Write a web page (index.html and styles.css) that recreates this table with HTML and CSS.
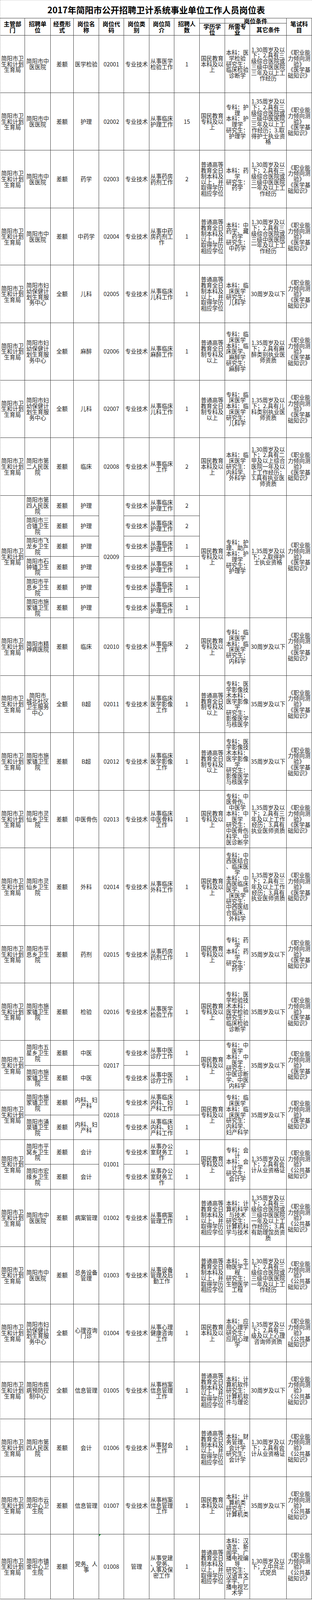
FILE: index.html
```html
<!DOCTYPE html>
<html lang="zh-CN">
<head>
<meta charset="utf-8">
<title>2017年简阳市公开招聘卫计系统事业单位工作人员岗位表</title>
<link rel="stylesheet" href="styles.css">
</head>
<body>
<div class="sheet">
  <div class="title">2017年简阳市公开招聘卫计系统事业单位工作人员岗位表</div>
  <div class="grid">
    <!-- header -->
    <div class="c h r2"><span>主管部<br>门</span></div>
    <div class="c h r2"><span>招聘单<br>位</span></div>
    <div class="c h r2"><span>经费形<br>式</span></div>
    <div class="c h r2"><span>岗位名<br>称</span></div>
    <div class="c h r2"><span>岗位代<br>码</span></div>
    <div class="c h r2"><span>岗位类<br>别</span></div>
    <div class="c h r2"><span>岗位简<br>介</span></div>
    <div class="c h r2"><span>招聘人<br>数</span></div>
    <div class="c h"><span></span></div>
    <div class="c h cs2 top"><span>岗位条件</span></div>
    <div class="c h r2"><span>笔试科<br>目</span></div>
    <div class="c h"><span>学历学<br>位</span></div>
    <div class="c h"><span>所需专<br>业</span></div>
    <div class="c h"><span>其它条件</span></div>

    <!-- 02001 -->
    <div class="c"><span>简阳市卫<br>生和计划<br>生育局</span></div>
    <div class="c"><span>简阳市中<br>医医院</span></div>
    <div class="c"><span>差额</span></div>
    <div class="c"><span>医学检验</span></div>
    <div class="c"><span>02001</span></div>
    <div class="c"><span>专业技术</span></div>
    <div class="c"><span>从事医学<br>检验工作</span></div>
    <div class="c"><span>1</span></div>
    <div class="c"><span>国民教育<br>本科及以<br>上</span></div>
    <div class="c"><span>本科：医<br>学检验<br>研究生：<br>临床检验<br>诊断学</span></div>
    <div class="c"><span>1.30周岁及以<br>下；2.具有三<br>级综合医院或<br>三级中医医院<br>三年及以上工<br>作经历</span></div>
    <div class="c"><span>《职业能<br>力倾向测<br>验》<br>《医学基<br>础知识》</span></div>

    <!-- 02002 -->
    <div class="c"><span>简阳市卫<br>生和计划<br>生育局</span></div>
    <div class="c"><span>简阳市中<br>医医院</span></div>
    <div class="c"><span>差额</span></div>
    <div class="c"><span>护理</span></div>
    <div class="c"><span>02002</span></div>
    <div class="c"><span>专业技术</span></div>
    <div class="c"><span>从事临床<br>护理工作</span></div>
    <div class="c"><span>15</span></div>
    <div class="c"><span>国民教育<br>专科及以<br>上</span></div>
    <div class="c"><span>专科：护<br>理<br>本科：护<br>理学<br>研究生：<br>护理学</span></div>
    <div class="c"><span>1.35周岁及以<br>下；2.具有三<br>级综合医院或<br>三级中医医院<br>三年及以上工<br>作经历；3.取<br>得护士执业资<br>格</span></div>
    <div class="c"><span>《职业能<br>力倾向测<br>验》<br>《医学基<br>础知识》</span></div>

    <!-- 02003 -->
    <div class="c"><span>简阳市卫<br>生和计划<br>生育局</span></div>
    <div class="c"><span>简阳市中<br>医医院</span></div>
    <div class="c"><span>差额</span></div>
    <div class="c"><span>药学</span></div>
    <div class="c"><span>02003</span></div>
    <div class="c"><span>专业技术</span></div>
    <div class="c"><span>从事药房<br>药剂工作</span></div>
    <div class="c"><span>2</span></div>
    <div class="c"><span>普通高等<br>教育全日<br>制本科及<br>以上，并<br>取得学历<br>相应学位</span></div>
    <div class="c"><span>本科：药<br>学<br>研究生：<br>药学</span></div>
    <div class="c"><span>1.30周岁及以<br>下；2.具有三<br>级综合医院或<br>三级中医医院<br>一年及以上工<br>作经历</span></div>
    <div class="c"><span>《职业能<br>力倾向测<br>验》<br>《医学基<br>础知识》</span></div>

    <!-- 02004 -->
    <div class="c"><span>简阳市卫<br>生和计划<br>生育局</span></div>
    <div class="c"><span>简阳市中<br>医医院</span></div>
    <div class="c"><span>差额</span></div>
    <div class="c"><span>中药学</span></div>
    <div class="c"><span>02004</span></div>
    <div class="c"><span>专业技术</span></div>
    <div class="c"><span>从事中药<br>房药剂工<br>作</span></div>
    <div class="c"><span>1</span></div>
    <div class="c"><span>普通高等<br>教育全日<br>制本科及<br>以上，并<br>取得学历<br>相应学位</span></div>
    <div class="c"><span>本科：中<br>药学、藏<br>药学<br>研究生：<br>中药学</span></div>
    <div class="c"><span>1.30周岁及以<br>下；2.具有三<br>级综合医院或<br>三级中医医院<br>一年及以上工<br>作经历</span></div>
    <div class="c"><span>《职业能<br>力倾向测<br>验》<br>《医学基<br>础知识》</span></div>

    <!-- 02005 -->
    <div class="c"><span>简阳市卫<br>生和计划<br>生育局</span></div>
    <div class="c"><span>简阳市妇<br>幼保健计<br>划生育服<br>务中心</span></div>
    <div class="c"><span>全额</span></div>
    <div class="c"><span>儿科</span></div>
    <div class="c"><span>02005</span></div>
    <div class="c"><span>专业技术</span></div>
    <div class="c"><span>从事临床<br>儿科工作</span></div>
    <div class="c"><span>1</span></div>
    <div class="c"><span>普通高等<br>教育全日<br>制本科及<br>以上，并<br>取得学历<br>相应学位</span></div>
    <div class="c"><span>本科：临<br>床医学<br>研究生：<br>儿科学</span></div>
    <div class="c"><span>30周岁及以下</span></div>
    <div class="c"><span>《职业能<br>力倾向测<br>验》<br>《医学基<br>础知识》</span></div>

    <!-- 02006 -->
    <div class="c"><span>简阳市卫<br>生和计划<br>生育局</span></div>
    <div class="c"><span>简阳市妇<br>幼保健计<br>划生育服<br>务中心</span></div>
    <div class="c"><span>全额</span></div>
    <div class="c"><span>麻醉</span></div>
    <div class="c"><span>02006</span></div>
    <div class="c"><span>专业技术</span></div>
    <div class="c"><span>从事临床<br>麻醉工作</span></div>
    <div class="c"><span>1</span></div>
    <div class="c"><span>普通高等<br>教育全日<br>制专科及<br>以上</span></div>
    <div class="c"><span>专科：临<br>床医学<br>本科：临<br>床医学、<br>麻醉学<br>研究生：<br>麻醉学</span></div>
    <div class="c"><span>1.35周岁及以<br>下；2.具有麻<br>醉类别执业医<br>师资质</span></div>
    <div class="c"><span>《职业能<br>力倾向测<br>验》<br>《医学基<br>础知识》</span></div>

    <!-- 02007 -->
    <div class="c"><span>简阳市卫<br>生和计划<br>生育局</span></div>
    <div class="c"><span>简阳市妇<br>幼保健计<br>划生育服<br>务中心</span></div>
    <div class="c"><span>全额</span></div>
    <div class="c"><span>儿科</span></div>
    <div class="c"><span>02007</span></div>
    <div class="c"><span>专业技术</span></div>
    <div class="c"><span>从事临床<br>儿科工作</span></div>
    <div class="c"><span>1</span></div>
    <div class="c"><span>普通高等<br>教育全日<br>制专科及<br>以上</span></div>
    <div class="c"><span>专科：临<br>床医学<br>本科：临<br>床医学<br>研究生：<br>儿科学</span></div>
    <div class="c"><span>1.35周岁及以<br>下；2.具有儿<br>科类别执业医<br>师资质</span></div>
    <div class="c"><span>《职业能<br>力倾向测<br>验》<br>《医学基<br>础知识》</span></div>

    <!-- 02008 -->
    <div class="c"><span>简阳市卫<br>生和计划<br>生育局</span></div>
    <div class="c"><span>简阳市第<br>二人民医<br>院</span></div>
    <div class="c"><span>差额</span></div>
    <div class="c"><span>临床</span></div>
    <div class="c"><span>02008</span></div>
    <div class="c"><span>专业技术</span></div>
    <div class="c"><span>从事临床<br>工作</span></div>
    <div class="c"><span>2</span></div>
    <div class="c"><span>国民教育<br>本科及以<br>上</span></div>
    <div class="c"><span>本科：临<br>床医学<br>研究生：<br>内科学、<br>外科学</span></div>
    <div class="c"><span>1.30周岁及以<br>下；2.具有二<br>甲及以上综合<br>医院一年及以<br>上工作经历；<br>3.具有执业医<br>师资质</span></div>
    <div class="c"><span>《职业能<br>力倾向测<br>验》<br>《医学基<br>础知识》</span></div>

    <!-- 02009 group -->
    <div class="c r6"><span>简阳市卫<br>生和计划<br>生育局</span></div>
    <div class="c"><span>简阳市第<br>四人民医<br>院</span></div>
    <div class="c"><span>差额</span></div>
    <div class="c"><span>护理</span></div>
    <div class="c r6"><span>02009</span></div>
    <div class="c"><span>专业技术</span></div>
    <div class="c"><span>从事临床<br>护理工作</span></div>
    <div class="c"><span>2</span></div>
    <div class="c r6"><span>国民教育<br>专科及以<br>上</span></div>
    <div class="c r6"><span>专科：护<br>理、助产<br>本科：护<br>理学<br>研究生：<br>护理学</span></div>
    <div class="c r6"><span>1.35周岁及以<br>下；2.取得护<br>士执业资格</span></div>
    <div class="c r6"><span>《职业能<br>力倾向测<br>验》<br>《医学基<br>础知识》</span></div>

    <div class="c"><span>简阳市三<br>合镇卫生<br>院</span></div>
    <div class="c"><span>差额</span></div>
    <div class="c"><span>护理</span></div>
    <div class="c"><span>专业技术</span></div>
    <div class="c"><span>从事临床<br>护理工作</span></div>
    <div class="c"><span>2</span></div>

    <div class="c"><span>简阳市飞<br>龙乡卫生<br>院</span></div>
    <div class="c"><span>差额</span></div>
    <div class="c"><span>护理</span></div>
    <div class="c"><span>专业技术</span></div>
    <div class="c"><span>从事临床<br>护理工作</span></div>
    <div class="c"><span>1</span></div>

    <div class="c"><span>简阳市石<br>钟镇卫生<br>院</span></div>
    <div class="c"><span>差额</span></div>
    <div class="c"><span>护理</span></div>
    <div class="c"><span>专业技术</span></div>
    <div class="c"><span>从事临床<br>护理工作</span></div>
    <div class="c"><span>1</span></div>

    <div class="c"><span>简阳市平<br>息乡卫生<br>院</span></div>
    <div class="c"><span>差额</span></div>
    <div class="c"><span>护理</span></div>
    <div class="c"><span>专业技术</span></div>
    <div class="c"><span>从事临床<br>护理工作</span></div>
    <div class="c"><span>1</span></div>

    <div class="c"><span>简阳市施<br>家镇卫生<br>院</span></div>
    <div class="c"><span>差额</span></div>
    <div class="c"><span>护理</span></div>
    <div class="c"><span>专业技术</span></div>
    <div class="c"><span>从事临床<br>护理工作</span></div>
    <div class="c"><span>1</span></div>

    <!-- 02010 -->
    <div class="c"><span>简阳市卫<br>生和计划<br>生育局</span></div>
    <div class="c"><span>简阳市精<br>神病医院</span></div>
    <div class="c"><span>差额</span></div>
    <div class="c"><span>临床</span></div>
    <div class="c"><span>02010</span></div>
    <div class="c"><span>专业技术</span></div>
    <div class="c"><span>从事临床<br>工作</span></div>
    <div class="c"><span>2</span></div>
    <div class="c"><span>国民教育<br>专科及以<br>上</span></div>
    <div class="c"><span>专科：临<br>床医学<br>本科：临<br>床医学<br>研究生：<br>内科学</span></div>
    <div class="c"><span>30周岁及以下</span></div>
    <div class="c"><span>《职业能<br>力倾向测<br>验》<br>《医学基<br>础知识》</span></div>

    <!-- 02011 -->
    <div class="c"><span>简阳市卫<br>生和计划<br>生育局</span></div>
    <div class="c"><span>简阳市<br>城北社区<br>卫生服务<br>中心</span></div>
    <div class="c"><span>全额</span></div>
    <div class="c"><span>B超</span></div>
    <div class="c"><span>02011</span></div>
    <div class="c"><span>专业技术</span></div>
    <div class="c"><span>从事临床<br>医学影像<br>工作</span></div>
    <div class="c"><span>1</span></div>
    <div class="c"><span>普通高等<br>教育全日<br>制专科及<br>以上</span></div>
    <div class="c"><span>专科：医<br>学影像技<br>术本科：<br>医学影像<br>学<br>研究生：<br>影像医学<br>与核医学</span></div>
    <div class="c"><span>35周岁及以下</span></div>
    <div class="c"><span>《职业能<br>力倾向测<br>验》<br>《医学基<br>础知识》</span></div>

    <!-- 02012 -->
    <div class="c"><span>简阳市卫<br>生和计划<br>生育局</span></div>
    <div class="c"><span>简阳市施<br>家镇卫生<br>院</span></div>
    <div class="c"><span>差额</span></div>
    <div class="c"><span>B超</span></div>
    <div class="c"><span>02012</span></div>
    <div class="c"><span>专业技术</span></div>
    <div class="c"><span>从事临床<br>医学影像<br>工作</span></div>
    <div class="c"><span>1</span></div>
    <div class="c"><span>普通高等<br>教育全日<br>制专科及<br>以上</span></div>
    <div class="c"><span>专科：医<br>学影像技<br>术本科：<br>医学影像<br>学<br>研究生：<br>影像医学<br>与核医学</span></div>
    <div class="c"><span>35周岁及以下</span></div>
    <div class="c"><span>《职业能<br>力倾向测<br>验》<br>《医学基<br>础知识》</span></div>

    <!-- 02013 -->
    <div class="c"><span>简阳市卫<br>生和计划<br>生育局</span></div>
    <div class="c"><span>简阳市灵<br>仙乡卫生<br>院</span></div>
    <div class="c"><span>差额</span></div>
    <div class="c"><span>中医骨伤</span></div>
    <div class="c"><span>02013</span></div>
    <div class="c"><span>专业技术</span></div>
    <div class="c"><span>从事临床<br>中医骨科<br>工作</span></div>
    <div class="c"><span>1</span></div>
    <div class="c"><span>国民教育<br>专科及以<br>上</span></div>
    <div class="c"><span>专科：中<br>医骨伤、<br>中医学<br>本科：中<br>医学<br>研究生：<br>中医骨伤<br>科学、中<br>医诊断学</span></div>
    <div class="c"><span>1.35周岁及以<br>下；2.具有三<br>年及以上工作<br>经历；3.具有<br>执业医师资质</span></div>
    <div class="c"><span>《职业能<br>力倾向测<br>验》<br>《医学基<br>础知识》</span></div>

    <!-- 02014 -->
    <div class="c"><span>简阳市卫<br>生和计划<br>生育局</span></div>
    <div class="c"><span>简阳市灵<br>仙乡卫生<br>院</span></div>
    <div class="c"><span>差额</span></div>
    <div class="c"><span>外科</span></div>
    <div class="c"><span>02014</span></div>
    <div class="c"><span>专业技术</span></div>
    <div class="c"><span>从事临床<br>外科工作</span></div>
    <div class="c"><span>1</span></div>
    <div class="c"><span>国民教育<br>专科及以<br>上</span></div>
    <div class="c"><span>专科：中<br>西医结合<br>、临床医<br>学<br>本科：中<br>西医临床<br>医学、临<br>床医学<br>研究生：<br>中西医结<br>合临床、<br>外科学</span></div>
    <div class="c"><span>1.35周岁及以<br>下；2.具有三<br>年及以上工作<br>经历；3.具有<br>执业医师资质</span></div>
    <div class="c"><span>《职业能<br>力倾向测<br>验》<br>《医学基<br>础知识》</span></div>

    <!-- 02015 -->
    <div class="c"><span>简阳市卫<br>生和计划<br>生育局</span></div>
    <div class="c"><span>简阳市平<br>息乡卫生<br>院</span></div>
    <div class="c"><span>差额</span></div>
    <div class="c"><span>药剂</span></div>
    <div class="c"><span>02015</span></div>
    <div class="c"><span>专业技术</span></div>
    <div class="c"><span>从事药房<br>药剂工作</span></div>
    <div class="c"><span>1</span></div>
    <div class="c"><span>国民教育<br>专科及以<br>上</span></div>
    <div class="c"><span>专科：药<br>学<br>本科：药<br>学<br>研究生：<br>药学</span></div>
    <div class="c"><span>35周岁及以下</span></div>
    <div class="c"><span>《职业能<br>力倾向测<br>验》<br>《医学基<br>础知识》</span></div>

    <!-- 02016 -->
    <div class="c"><span>简阳市卫<br>生和计划<br>生育局</span></div>
    <div class="c"><span>简阳市施<br>家镇卫生<br>院</span></div>
    <div class="c"><span>差额</span></div>
    <div class="c"><span>检验</span></div>
    <div class="c"><span>02016</span></div>
    <div class="c"><span>专业技术</span></div>
    <div class="c"><span>从事医学<br>检验工作</span></div>
    <div class="c"><span>1</span></div>
    <div class="c"><span>国民教育<br>专科及以<br>上</span></div>
    <div class="c"><span>专科：医<br>学检验技<br>术本科：<br>医学检验<br>研究生：<br>临床检验<br>诊断学</span></div>
    <div class="c"><span>35周岁及以下</span></div>
    <div class="c"><span>《职业能<br>力倾向测<br>验》<br>《医学基<br>础知识》</span></div>

    <!-- 02017 group -->
    <div class="c r2"><span>简阳市卫<br>生和计划<br>生育局</span></div>
    <div class="c"><span>简阳市五<br>星乡卫生<br>院</span></div>
    <div class="c"><span>差额</span></div>
    <div class="c"><span>中医</span></div>
    <div class="c r2"><span>02017</span></div>
    <div class="c"><span>专业技术</span></div>
    <div class="c"><span>从事中医<br>诊疗工作</span></div>
    <div class="c"><span>1</span></div>
    <div class="c r2"><span>国民教育<br>专科及以<br>上</span></div>
    <div class="c r2"><span>专科：中<br>医学<br>本科：中<br>医学<br>研究生：<br>中医诊断<br>学、中医<br>内科学</span></div>
    <div class="c r2"><span>35周岁及以下</span></div>
    <div class="c r2"><span>《职业能<br>力倾向测<br>验》<br>《医学基<br>础知识》</span></div>

    <div class="c"><span>简阳市施<br>家镇卫生<br>院</span></div>
    <div class="c"><span>差额</span></div>
    <div class="c"><span>中医</span></div>
    <div class="c"><span>专业技术</span></div>
    <div class="c"><span>从事中医<br>诊疗工作</span></div>
    <div class="c"><span>1</span></div>

    <!-- 02018 group -->
    <div class="c r2"><span>简阳市卫<br>生和计划<br>生育局</span></div>
    <div class="c"><span>简阳市施<br>家镇卫生<br>院</span></div>
    <div class="c"><span>差额</span></div>
    <div class="c"><span>内科、妇<br>产科</span></div>
    <div class="c r2"><span>02018</span></div>
    <div class="c"><span>专业技术</span></div>
    <div class="c"><span>从事临床<br>内科、妇<br>产科工作</span></div>
    <div class="c"><span>1</span></div>
    <div class="c r2"><span>国民教育<br>专科及以<br>上</span></div>
    <div class="c r2"><span>专科：临<br>床医学<br>本科：临<br>床医学<br>研究生：<br>内科学、<br>妇产科学</span></div>
    <div class="c r2"><span>35周岁及以下</span></div>
    <div class="c r2"><span>《职业能<br>力倾向测<br>验》<br>《医学基<br>础知识》</span></div>

    <div class="c"><span>简阳市涌<br>泉镇卫生<br>院</span></div>
    <div class="c"><span>差额</span></div>
    <div class="c"><span>内科、妇<br>产科</span></div>
    <div class="c"><span>专业技术</span></div>
    <div class="c"><span>从事临床<br>内科、妇<br>产科工作</span></div>
    <div class="c"><span>1</span></div>

    <!-- 01001 group -->
    <div class="c r2"><span>简阳市卫<br>生和计划<br>生育局</span></div>
    <div class="c"><span>简阳市平<br>窝乡卫生<br>院</span></div>
    <div class="c"><span>差额</span></div>
    <div class="c"><span>会计</span></div>
    <div class="c r2"><span>01001</span></div>
    <div class="c"><span>专业技术</span></div>
    <div class="c"><span>从事办公<br>室财务工<br>作</span></div>
    <div class="c"><span>1</span></div>
    <div class="c r2"><span>国民教育<br>专科及以<br>上</span></div>
    <div class="c r2"><span>专科：会<br>计<br>本科：会<br>计学<br>研究生：<br>会计学</span></div>
    <div class="c r2"><span>1.35周岁及以<br>下；2.具有会<br>计从业资格证</span></div>
    <div class="c r2"><span>《职业能<br>力倾向测<br>验》<br>《公共基<br>础知识》</span></div>

    <div class="c"><span>简阳市宏<br>缘乡卫生<br>院</span></div>
    <div class="c"><span>差额</span></div>
    <div class="c"><span>会计</span></div>
    <div class="c"><span>专业技术</span></div>
    <div class="c"><span>从事办公<br>室财务工<br>作</span></div>
    <div class="c"><span>1</span></div>

    <!-- 01002 -->
    <div class="c"><span>简阳市卫<br>生和计划<br>生育局</span></div>
    <div class="c"><span>简阳市中<br>医医院</span></div>
    <div class="c"><span>差额</span></div>
    <div class="c"><span>病案管理</span></div>
    <div class="c"><span>01002</span></div>
    <div class="c"><span>专业技术</span></div>
    <div class="c"><span>从事病案<br>管理工作</span></div>
    <div class="c"><span>1</span></div>
    <div class="c"><span>普通高等<br>教育全日<br>制本科及<br>以上，并<br>取得学历<br>相应学位</span></div>
    <div class="c"><span>本科：计<br>算机科学<br>与技术<br>研究生：<br>计算机科<br>学与技术</span></div>
    <div class="c"><span>1.35周岁及以<br>下；2.具有三<br>级综合医院或<br>三级中医医院<br>一年及以上工<br>作经历；3.具<br>有助理馆员资<br>质</span></div>
    <div class="c"><span>《职业能<br>力倾向测<br>验》<br>《公共基<br>础知识》</span></div>

    <!-- 01003 -->
    <div class="c"><span>简阳市卫<br>生和计划<br>生育局</span></div>
    <div class="c"><span>简阳市中<br>医医院</span></div>
    <div class="c"><span>差额</span></div>
    <div class="c"><span>总务设备<br>管理</span></div>
    <div class="c"><span>01003</span></div>
    <div class="c"><span>专业技术</span></div>
    <div class="c"><span>从事设备<br>管理及后<br>勤工作</span></div>
    <div class="c"><span>1</span></div>
    <div class="c"><span>普通高等<br>教育全日<br>制本科及<br>以上，并<br>取得学历<br>相应学位</span></div>
    <div class="c"><span>本科：生<br>物医学工<br>程<br>研究生：<br>生物医学<br>工程</span></div>
    <div class="c"><span>1.30周岁及以<br>下；2.具有三<br>级综合医院或<br>三级中医医院<br>一年及以上工<br>作经历</span></div>
    <div class="c"><span>《职业能<br>力倾向测<br>验》<br>《公共基<br>础知识》</span></div>

    <!-- 01004 -->
    <div class="c"><span>简阳市卫<br>生和计划<br>生育局</span></div>
    <div class="c"><span>简阳市妇<br>幼保健计<br>划生育服<br>务中心</span></div>
    <div class="c"><span>全额</span></div>
    <div class="c"><span>心理咨询<br>门诊</span></div>
    <div class="c"><span>01004</span></div>
    <div class="c"><span>专业技术</span></div>
    <div class="c"><span>从事心理<br>健康咨询<br>工作</span></div>
    <div class="c"><span>1</span></div>
    <div class="c"><span>国民教育<br>本科及以<br>上</span></div>
    <div class="c"><span>本科：应<br>用心理学<br>研究生：<br>应用心理<br>学</span></div>
    <div class="c"><span>1.35周岁及以<br>下；2.具有三<br>级及以上心理<br>咨询师资质</span></div>
    <div class="c"><span>《职业能<br>力倾向测<br>验》<br>《公共基<br>础知识》</span></div>

    <!-- 01005 -->
    <div class="c"><span>简阳市卫<br>生和计划<br>生育局</span></div>
    <div class="c"><span>简阳市疾<br>病预防控<br>制中心</span></div>
    <div class="c"><span>全额</span></div>
    <div class="c"><span>信息管理</span></div>
    <div class="c"><span>01005</span></div>
    <div class="c"><span>专业技术</span></div>
    <div class="c"><span>从事档案<br>信息管理<br>工作</span></div>
    <div class="c"><span>1</span></div>
    <div class="c"><span>普通高等<br>教育全日<br>制本科及<br>以上，并<br>取得学历<br>相应学位</span></div>
    <div class="c"><span>本科：计<br>算机软件<br>研究生：<br>计算机软<br>件与理论</span></div>
    <div class="c"><span>30周岁及以下</span></div>
    <div class="c"><span>《职业能<br>力倾向测<br>验》<br>《公共基<br>础知识》</span></div>

    <!-- 01006 -->
    <div class="c"><span>简阳市卫<br>生和计划<br>生育局</span></div>
    <div class="c"><span>简阳市第<br>四人民医<br>院</span></div>
    <div class="c"><span>差额</span></div>
    <div class="c"><span>会计</span></div>
    <div class="c"><span>01006</span></div>
    <div class="c"><span>专业技术</span></div>
    <div class="c"><span>从事财会<br>工作</span></div>
    <div class="c"><span>1</span></div>
    <div class="c"><span>普通高等<br>教育全日<br>制本科及<br>以上，并<br>取得学历<br>相应学位</span></div>
    <div class="c"><span>本科：财<br>务管理、<br>会计学<br>研究生：<br>会计学</span></div>
    <div class="c"><span>1.30周岁及以<br>下；2.具有会<br>计从业资格证</span></div>
    <div class="c"><span>《职业能<br>力倾向测<br>验》<br>《公共基<br>础知识》</span></div>

    <!-- 01007 -->
    <div class="c"><span>简阳市卫<br>生和计划<br>生育局</span></div>
    <div class="c"><span>简阳市云<br>龙中心卫<br>生院</span></div>
    <div class="c"><span>差额</span></div>
    <div class="c"><span>信息管理</span></div>
    <div class="c"><span>01007</span></div>
    <div class="c"><span>专业技术</span></div>
    <div class="c"><span>从事档案<br>信息管理<br>工作</span></div>
    <div class="c"><span>1</span></div>
    <div class="c"><span>国民教育<br>本科及以<br>上</span></div>
    <div class="c"><span>本科：计<br>算机类<br>研究生：<br>计算机类</span></div>
    <div class="c"><span>35周岁及以下</span></div>
    <div class="c"><span>《职业能<br>力倾向测<br>验》<br>《公共基<br>础知识》</span></div>

    <!-- 01008 -->
    <div class="c"><span>简阳市卫<br>生和计划<br>生育局</span></div>
    <div class="c"><span>简阳市镇<br>金中心卫<br>生院</span></div>
    <div class="c"><span>差额</span></div>
    <div class="c"><span>党务、人<br>事</span></div>
    <div class="c flag"><span>01008</span></div>
    <div class="c"><span>管理</span></div>
    <div class="c"><span>从事党建<br>、党务、<br>人事及保<br>密工作</span></div>
    <div class="c"><span>1</span></div>
    <div class="c"><span>普通高等<br>教育全日<br>制本科及<br>以上，并<br>取得学历<br>相应学位</span></div>
    <div class="c"><span>本科：汉<br>语言、新<br>闻学、广<br>播电视编<br>导<br>研究生：<br>汉语言文<br>字学、广<br>播电视艺<br>术学</span></div>
    <div class="c"><span>1.30周岁及以<br>下；2.中共正<br>式党员</span></div>
    <div class="c"><span>《职业能<br>力倾向测<br>验》<br>《公共基<br>础知识》</span></div>
  </div>
</div>
</body>
</html>
```

FILE: styles.css
```css
html, body {
  margin: 0;
  padding: 0;
  background: #ffffff;
}

body {
  font-family: "Noto Sans CJK SC", sans-serif;
  color: #1c1c1c;
}

.sheet {
  width: 800px;
}

.title {
  box-sizing: border-box;
  height: 46px;
  display: flex;
  align-items: center;
  justify-content: center;
  font-size: 22px;
  line-height: 26px;
  font-weight: bold;
  color: #000;
  border-top: 1px dotted #b5b5b5;
  border-left: 1px dotted #b5b5b5;
}

.grid {
  box-sizing: border-box;
  width: 800px;
  display: grid;
  grid-template-columns: 63px 66px 59px 65px 64px 65px 64px 65px 65px 64px 94px 65px;
  grid-template-rows:
    13.25px 30.92px
    146.63px 147.52px 147.52px 146.63px 147.52px 146.63px 147.52px 147.52px
    52.12px 52.12px 52.12px 53px 52.12px 52.12px
    147.52px 146.63px 147.52px 147.52px 198.75px 146.63px 147.52px
    63.6px 63.6px 63.6px 62.72px 63.6px 63.6px
    146.63px 147.52px 147.52px 146.63px 147.52px 147.52px 166.07px;
  border-top: 1px solid #3a3a3a;
  border-left: 1px dotted #8a8a8a;
}

.c {
  box-sizing: border-box;
  display: flex;
  align-items: center;
  justify-content: center;
  padding: 0 1px;
  border-right: 1px solid #3a3a3a;
  border-bottom: 1px solid #3a3a3a;
  text-align: center;
  white-space: nowrap;
  font-size: 14.5px;
  line-height: 14.75px;
  min-width: 0;
  min-height: 0;
}

.c > span {
  display: block;
}

.h {
  font-size: 15px;
  line-height: 15.3px;
  font-weight: bold;
  color: #000;
}

.h.top {
  line-height: 13px;
}

.r2 { grid-row: span 2; }
.r6 { grid-row: span 6; }
.cs2 { grid-column: span 2; }

.flag {
  position: relative;
}

.flag::before {
  content: "";
  position: absolute;
  left: 0;
  top: 0;
  border-top: 5px solid #1e9a3a;
  border-right: 5px solid transparent;
}
```
